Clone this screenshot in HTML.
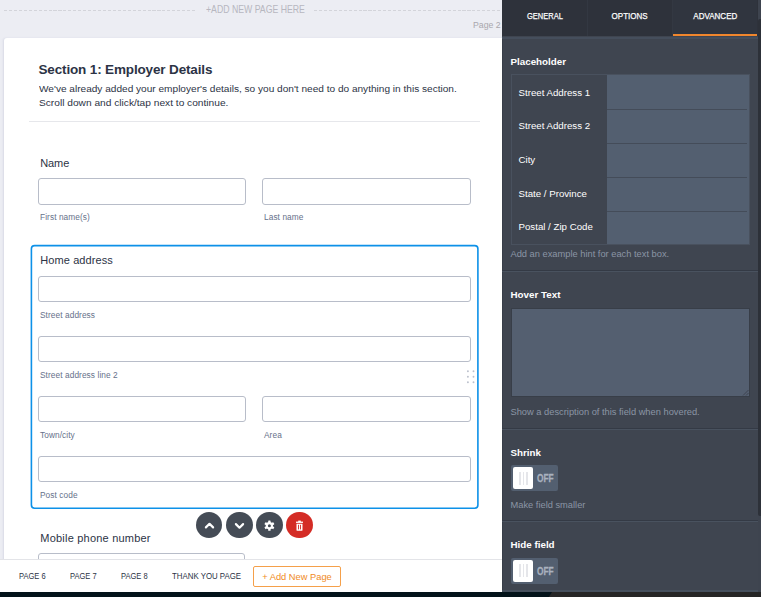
<!DOCTYPE html>
<html lang="en">
<head>
<meta charset="utf-8">
<title>Form Builder</title>
<style>
*{box-sizing:border-box;margin:0;padding:0}
html,body{width:761px;height:597px;overflow:hidden}
body{position:relative;background:#ecedf3;font-family:"Liberation Sans",sans-serif;color:#2c3345}
.abs{position:absolute;white-space:nowrap}
/* canvas */
#dash-l,#dash-r{position:absolute;top:10px;height:1px;background:repeating-linear-gradient(90deg,#d3d4da 0,#d3d4da 3.1px,transparent 3.1px,transparent 4.95px)}
#dash-l{left:3.9px;width:191.5px}
#dash-r{left:314px;width:188px}
#addhere{left:206px;top:3.8px;font-size:10.2px;line-height:12px;color:#b7b7c0;transform:scaleX(.856);transform-origin:0 0}
#pg2{left:473px;top:18.9px;font-size:9.4px;line-height:12px;color:#a9a7ad;transform:scaleX(.93);transform-origin:0 0}
#card{position:absolute;left:4px;top:38px;width:500px;height:530px;background:#fff;border-radius:3px 0 0 0;box-shadow:-1px 0 2px rgba(120,125,165,.16)}
#h1{left:38.5px;top:61px;font-size:13.5px;line-height:17px;font-weight:bold;color:#2c3345;letter-spacing:-0.15px}
.sub{left:38.5px;font-size:9.2px;line-height:14px;color:#2c3345;transform:scaleX(1.098);transform-origin:0 0}
#divider{position:absolute;left:29px;top:121px;width:451px;height:1px;background:#e6e7eb}
.lbl{font-size:11px;line-height:14px;color:#2c3345;letter-spacing:.05px}
.inp{position:absolute;height:26px;border:1px solid #b8bdc9;border-radius:3px;background:#fff}
.sl{font-size:8.3px;line-height:10px;color:#66718a;letter-spacing:.08px}
#sel{position:absolute;left:0;top:0}
.circ{position:absolute;top:511.6px;width:26.8px;height:26.8px;border-radius:50%;background:#454c56}
.circ svg{position:absolute;left:0;top:0}
/* bottom bar */
#bbar{position:absolute;left:0;top:559px;width:502px;height:33px;background:#fff;border-top:1px solid #e3e4e8}
.tab{font-size:9.2px;line-height:12px;color:#2c3345;top:570px;transform:scaleX(.82);transform-origin:0 0}
#addbtn{position:absolute;left:253px;top:566px;width:88px;height:21px;border:1px solid #f5a04a;border-radius:2px;background:#fff;color:#f08a24;font-size:9.3px;line-height:20.5px;text-align:center}
#foot{position:absolute;left:0;top:591.7px;width:761px;height:5.3px;background:#03131a}
#foot2{position:absolute;left:548px;top:591.7px;width:213px;height:5.3px;background:#262626;clip-path:polygon(4.2px 0,100% 0,100% 100%,.8px 100%)}
#pbot{position:absolute;left:0;top:590.4px;width:256px;height:1.3px;background:#46505d}
/* panel */
#panel{position:absolute;left:502px;top:0;width:259px;height:592px;background:#3f4550;box-shadow:inset 1px 0 0 #383e49}
#tabs{position:absolute;left:0;top:0;width:255.6px;height:36px;background:#2e323b}
#tabline{position:absolute;left:0;top:37px;width:256px;height:1.8px;background:#454e5c}
.tsep{position:absolute;top:0;width:1px;height:36px;background:#333842}
.pt{position:absolute;top:0;height:36px;width:85px;text-align:center;color:#fff;font-size:9.6px;line-height:32px}
.pt span{display:inline-block;transform:scaleX(.78);-webkit-text-stroke:.25px #fff}
#pt3{background:#30353f;border-bottom:2px solid #f0862d}
.ph{color:#fff;font-weight:bold;font-size:9.8px;line-height:13px;left:8.5px}
.hint{color:#8b95a5;font-size:9.3px;line-height:12px;left:8.5px}
.sep{position:absolute;left:0;width:256px;height:2px;background:linear-gradient(#343a45 0,#343a45 50%,#49525f 50%,#49525f 100%)}
#tbl{position:absolute;left:8.5px;top:74px;width:239.5px;height:171px;background:#535f70;border:1px solid #49515e}
.row{position:absolute;left:0;width:95.3px;height:34px;background:#3f4550;color:#fff;font-size:9.7px;line-height:34px;padding-left:7px}
.rl{position:absolute;left:95.3px;width:140.7px;height:1px;background:#444c59}
#ta{position:absolute;left:9px;top:307.6px;width:239px;height:89.9px;background:#545f70;border:1px solid #383e48}
.tog{position:absolute;left:9px;width:47px;height:26px;background:#535f70;border-radius:2px}
.knob{position:absolute;left:2px;top:2px;width:20px;height:22px;background:#fff;border-radius:2px}
.knob i{position:absolute;top:4.3px;width:1.6px;height:13px;background:#e5e6ea;margin-left:.2px}
.off{position:absolute;left:26.3px;top:.8px;font-size:10.4px;line-height:26px;font-weight:bold;color:#a9b1be;-webkit-text-stroke:.3px #a9b1be;transform:scaleX(.80);transform-origin:0 50%}
#sb{position:absolute;left:255.5px;top:0;width:4px;height:592px;background:#3e444f}
#sbt{position:absolute;left:256.3px;top:19px;width:3px;height:496.5px;background:#2d3139;border-radius:2px 0 0 2px}
</style>
</head>
<body>
<div id="dash-l"></div><div id="dash-r"></div>
<div class="abs" id="addhere">+ADD NEW PAGE HERE</div>
<div class="abs" id="pg2">Page 2</div>
<div id="card"></div>
<div class="abs" id="h1">Section 1: Employer Details</div>
<div class="abs sub" style="top:81.6px">We've already added your employer's details, so you don't need to do anything in this section.</div>
<div class="abs sub" style="top:96.1px;transform:scaleX(1.107)">Scroll down and click/tap next to continue.</div>
<div id="divider"></div>

<div class="abs lbl" style="left:40.3px;top:156px;letter-spacing:-.12px">Name</div>
<div class="inp" style="left:38px;top:178px;width:208px;height:27px"></div>
<div class="inp" style="left:262px;top:178px;width:209px;height:27px"></div>
<div class="abs sl" style="left:40px;top:212px">First name(s)</div>
<div class="abs sl" style="left:264px;top:212px">Last name</div>

<svg id="sel" width="502" height="560" viewBox="0 0 502 560"><rect x="31.4" y="245.6" width="446.5" height="262.6" rx="3.2" fill="none" stroke="#0d91e8" stroke-width="1.6"/></svg>
<div class="abs lbl" style="left:40.3px;top:253px;letter-spacing:.09px">Home address</div>
<div class="inp" style="left:38px;top:276px;width:433px"></div>
<div class="abs sl" style="left:40px;top:310px">Street address</div>
<div class="inp" style="left:38px;top:336px;width:433px"></div>
<div class="abs sl" style="left:40px;top:370px">Street address line 2</div>
<div class="inp" style="left:38px;top:396px;width:208px"></div>
<div class="inp" style="left:262px;top:396px;width:209px"></div>
<div class="abs sl" style="left:40px;top:430px">Town/city</div>
<div class="abs sl" style="left:264px;top:430px">Area</div>
<div class="inp" style="left:38px;top:456px;width:433px"></div>
<div class="abs sl" style="left:40px;top:490px">Post code</div>

<div class="abs lbl" style="left:40.3px;top:531px;letter-spacing:.21px">Mobile phone number</div>
<div class="inp" style="left:38px;top:553px;width:207px"></div>

<div class="circ" style="left:195.5px"><svg width="27" height="27" viewBox="0 0 27 27"><path d="M9.9 15.4 L13.5 11.8 L17.1 15.4" fill="none" stroke="#fff" stroke-width="2.2" stroke-linecap="round" stroke-linejoin="round"/></svg></div>
<div class="circ" style="left:225.8px"><svg width="27" height="27" viewBox="0 0 27 27"><path d="M9.9 12.1 L13.5 15.7 L17.1 12.1" fill="none" stroke="#fff" stroke-width="2.2" stroke-linecap="round" stroke-linejoin="round"/></svg></div>
<div class="circ" style="left:256px"><svg width="27" height="27" viewBox="0 0 27 27"><g transform="translate(13.4 13.7)" fill="#fff"><circle r="3.6"/><g id="gt"><rect x="-1.2" y="-5.1" width="2.4" height="10.2" rx=".4"/></g><use href="#gt" transform="rotate(60)"/><use href="#gt" transform="rotate(120)"/><circle r="1.5" fill="#454c56"/></g></svg></div>
<div class="circ" style="left:286px;background:#d42c25"><svg width="27" height="27" viewBox="0 0 27 27"><g fill="#fff"><rect x="10" y="9.6" width="7" height="1.3"/><rect x="12.2" y="8.6" width="2.6" height="1.4"/><path d="M10.5 11.7 h6 v6.2 a.9 .9 0 0 1 -.9 .9 h-4.2 a.9 .9 0 0 1 -.9 -.9 z"/></g><rect x="12.1" y="12.8" width=".9" height="4.6" fill="#d42c25"/><rect x="14" y="12.8" width=".9" height="4.6" fill="#d42c25"/></svg></div>
<svg class="abs" style="left:466px;top:369px" width="10" height="16" viewBox="0 0 10 16"><g fill="#bcc0cc"><circle cx="1.9" cy="2.3" r=".95"/><circle cx="7.5" cy="2.3" r=".95"/><circle cx="1.9" cy="7.7" r=".95"/><circle cx="7.5" cy="7.7" r=".95"/><circle cx="1.9" cy="13.2" r=".95"/><circle cx="7.5" cy="13.2" r=".95"/></g></svg>
<div id="bbar"></div>
<div class="abs tab" style="left:18.6px">PAGE 6</div>
<div class="abs tab" style="left:69.9px">PAGE 7</div>
<div class="abs tab" style="left:120.5px">PAGE 8</div>
<div class="abs tab" style="left:171.9px;transform:scaleX(.855)">THANK YOU PAGE</div>
<div id="addbtn">+ Add New Page</div>

<div id="panel">
  <div id="tabs">
    <div class="pt" style="left:0"><span>GENERAL</span></div>
    <div class="pt" style="left:85px"><span style="transform:scaleX(.835)">OPTIONS</span></div>
    <div class="pt" id="pt3" style="left:171px;width:84px"><span style="transform:scaleX(.835)">ADVANCED</span></div>
  </div>
  <div class="tsep" style="left:84.5px"></div><div class="tsep" style="left:170.3px"></div><div id="tabline"></div><div id="pbot"></div><div id="sb"></div><div id="sbt"></div>
  <div class="abs ph" style="top:55px">Placeholder</div>
  <div id="tbl">
    <div class="row" style="top:0;padding-top:.8px">Street Address 1</div>
    <div class="row" style="top:34px">Street Address 2</div>
    <div class="row" style="top:68px">City</div>
    <div class="row" style="top:102px">State / Province</div>
    <div class="row" style="top:135.3px;height:33.7px">Postal / Zip Code</div>
    <div class="rl" style="top:34px"></div>
    <div class="rl" style="top:68px"></div>
    <div class="rl" style="top:102px"></div>
    <div class="rl" style="top:136px"></div>
  </div>
  <div class="abs hint" style="top:248px">Add an example hint for each text box.</div>
  <div class="sep" style="top:270px"></div>
  <div class="abs ph" style="top:288px">Hover Text</div>
  <div id="ta"><svg style="position:absolute;right:0;bottom:0" width="7" height="7" viewBox="0 0 7 7"><path d="M6.5 1 L1 6.5 M6.5 4 L4 6.5" stroke="#3e4551" stroke-width="1"/></svg></div>
  <div class="abs hint" style="top:406px">Show a description of this field when hovered.</div>
  <div class="sep" style="top:428px"></div>
  <div class="abs ph" style="top:446px">Shrink</div>
  <div class="tog" style="top:465.3px"><div class="knob"><i style="left:6px"></i><i style="left:9.5px"></i><i style="left:13px"></i></div><div class="off">OFF</div></div>
  <div class="abs hint" style="top:498.7px">Make field smaller</div>
  <div class="sep" style="top:520px"></div>
  <div class="abs ph" style="top:538px">Hide field</div>
  <div class="tog" style="top:557.8px"><div class="knob"><i style="left:6px"></i><i style="left:9.5px"></i><i style="left:13px"></i></div><div class="off">OFF</div></div>
</div>
<div id="foot"></div><div id="foot2"></div>
</body>
</html>
